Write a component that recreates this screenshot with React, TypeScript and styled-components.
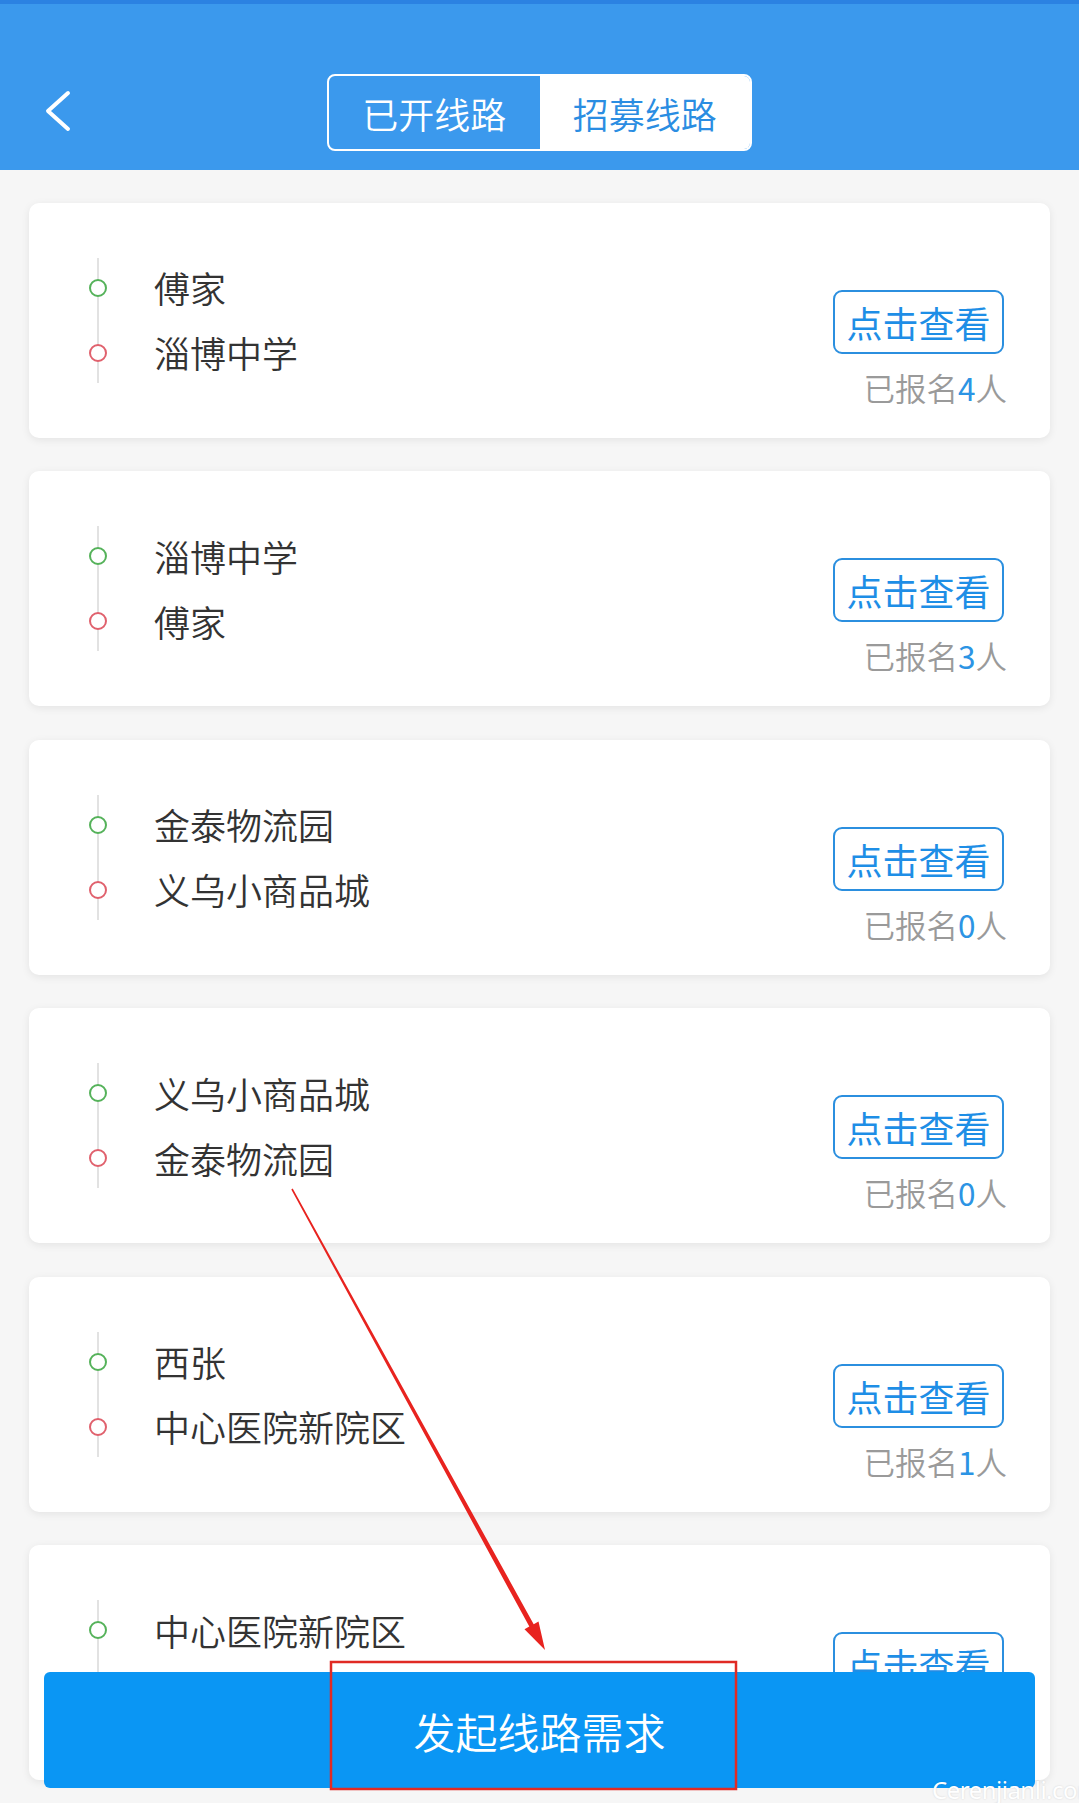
import React from "react";
import styled, { createGlobalStyle } from "styled-components";

const GlobalStyle = createGlobalStyle`
  html, body {
    margin: 0;
    padding: 0;
    background: #f6f6f6;
    overflow: hidden;
  }
  * { box-sizing: border-box; }
`;

const Page = styled.div`
  position: relative;
  width: 1079px;
  height: 1803px;
  overflow: hidden;
  background: #f6f6f6;
  font-family: "Noto Sans CJK SC", "Noto Sans", sans-serif;
  font-weight: 400;
`;

const Header = styled.header`
  height: 170px;
  background: #3b99ed;
  border-top: 4px solid #2b82e2;
  padding-top: 51px;
  display: grid;
  grid-template-columns: 1fr auto 1fr;
  align-items: center;
`;

const BackButton = styled.button`
  justify-self: start;
  margin-left: 42px;
  margin-top: -4px;
  width: 32px;
  height: 44px;
  padding: 0;
  border: none;
  background: transparent;
  display: flex;
  align-items: center;
  justify-content: center;
`;

const Segment = styled.div`
  display: flex;
  width: 425px;
  height: 77px;
  border: 2px solid #ffffff;
  border-radius: 8px;
  overflow: hidden;
`;

const SegmentItem = styled.div<{ $active?: boolean }>`
  flex: 1;
  display: flex;
  align-items: center;
  justify-content: center;
  font-size: 36px;
  font-weight: 350;
  color: ${(p) => (p.$active ? "#2a8de2" : "#ffffff")};
  background: ${(p) => (p.$active ? "#ffffff" : "transparent")};
`;

const List = styled.div`
  display: flex;
  flex-direction: column;
  gap: 33.5px;
  padding: 32.5px 29px 0 29px;
`;

const Card = styled.div`
  height: 235px;
  flex-shrink: 0;
  background: #ffffff;
  border-radius: 10px;
  box-shadow: 0 2px 8px rgba(0, 0, 0, 0.08);
  display: flex;
  align-items: center;
  padding-left: 60px;
`;

const Markers = styled.div`
  width: 18px;
  display: flex;
  flex-direction: column;
  align-items: center;
`;

const LineSeg = styled.div<{ $h: number }>`
  width: 2px;
  height: ${(p) => p.$h}px;
  background: #e2e2e2;
`;

const Dot = styled.div<{ $color: string }>`
  width: 18px;
  height: 18px;
  border-radius: 50%;
  border: 2px solid ${(p) => p.$color};
  background: #ffffff;
`;

const Stops = styled.div`
  display: flex;
  flex-direction: column;
  margin-left: 47px;
`;

const Stop = styled.div`
  height: 65px;
  line-height: 65px;
  font-size: 36px;
  font-weight: 350;
  color: #333333;
  white-space: nowrap;
`;

const Side = styled.div`
  margin-left: auto;
  margin-right: 46px;
  align-self: flex-start;
  margin-top: 87px;
  display: flex;
  flex-direction: column;
  align-items: flex-end;
`;

const ViewButton = styled.button`
  width: 171px;
  height: 64px;
  padding: 0;
  border: 2px solid #2b8fdf;
  border-radius: 9px;
  background: #ffffff;
  color: #1e8ee6;
  font-family: inherit;
  font-weight: 400;
  font-size: 36px;
  line-height: 58px;
  display: flex;
  align-items: center;
  justify-content: center;
`;

const Count = styled.div`
  margin-top: 15px;
  margin-right: -3px;
  font-size: 31.5px;
  line-height: 36px;
  font-weight: 350;
  color: #9a9a9a;
`;

const Num = styled.span`
  color: #2c94e4;
  font-weight: 400;
`;

const SubmitBar = styled.button`
  position: absolute;
  left: 44px;
  right: 44px;
  bottom: 15px;
  height: 116px;
  border: none;
  border-radius: 6px;
  background: #0a96f4;
  color: #ffffff;
  font-family: inherit;
  font-weight: 350;
  font-size: 42px;
  display: flex;
  align-items: center;
  justify-content: center;
  padding: 0;
`;

const Annotation = styled.svg`
  position: absolute;
  left: 0;
  top: 0;
  width: 1079px;
  height: 1803px;
  pointer-events: none;
`;

const Watermark = styled.div`
  position: absolute;
  left: 932px;
  top: 1776px;
  font-family: "Noto Sans", sans-serif;
  font-size: 24px;
  line-height: 28px;
  letter-spacing: -0.5px;
  color: #ffffff;
  text-shadow: 0 0 2px rgba(0, 0, 0, 0.15);
  white-space: nowrap;
`;

const routes = [
  { from: "傅家", to: "淄博中学", n: 4 },
  { from: "淄博中学", to: "傅家", n: 3 },
  { from: "金泰物流园", to: "义乌小商品城", n: 0 },
  { from: "义乌小商品城", to: "金泰物流园", n: 0 },
  { from: "西张", to: "中心医院新院区", n: 1 },
  { from: "中心医院新院区", to: "西张", n: 1 },
];

export default function App() {
  return (
    <Page>
      <GlobalStyle />
      <Header>
        <BackButton aria-label="返回">
          <svg width="28" height="44" viewBox="0 0 28 44">
            <polyline
              points="24,4 4,22 24,40"
              fill="none"
              stroke="#ffffff"
              strokeWidth="4"
              strokeLinecap="round"
              strokeLinejoin="round"
            />
          </svg>
        </BackButton>
        <Segment>
          <SegmentItem>已开线路</SegmentItem>
          <SegmentItem $active>招募线路</SegmentItem>
        </Segment>
        <div />
      </Header>
      <List>
        {routes.map((r, i) => (
          <Card key={i}>
            <Markers>
              <LineSeg $h={21} />
              <Dot $color="#55b25a" />
              <LineSeg $h={47} />
              <Dot $color="#e0616d" />
              <LineSeg $h={21} />
            </Markers>
            <Stops>
              <Stop>{r.from}</Stop>
              <Stop>{r.to}</Stop>
            </Stops>
            <Side>
              <ViewButton>点击查看</ViewButton>
              <Count>
                已报名<Num>{r.n}</Num>人
              </Count>
            </Side>
          </Card>
        ))}
      </List>
      <SubmitBar>发起线路需求</SubmitBar>
      <Annotation viewBox="0 0 1079 1803">
        <polygon
          points="291.3,1189.4 529.3,1626.6 524.5,1629.3 545,1650 538.5,1621.6 533.7,1624.2 292.7,1188.6"
          fill="#e8231f"
        />
        <rect
          x="331"
          y="1662"
          width="405"
          height="127"
          fill="none"
          stroke="#e02a24"
          strokeWidth="2.5"
        />
      </Annotation>
      <Watermark>Cerenjianli.com</Watermark>
    </Page>
  );
}
